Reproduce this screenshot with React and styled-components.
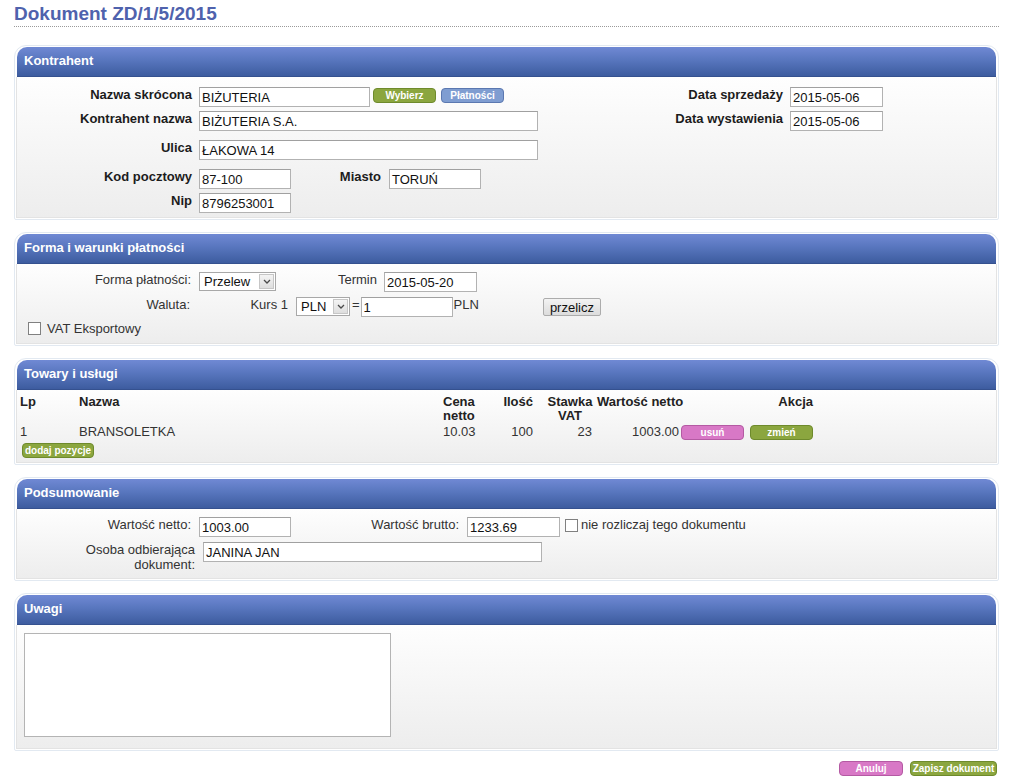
import React from 'react';
import styled, { createGlobalStyle } from 'styled-components';

const GlobalStyle = createGlobalStyle`
  body {
    margin: 0;
    background: #fff;
    font-family: "Liberation Sans", Arial, sans-serif;
    font-size: 13px;
    color: #333;
  }
`

const Page = styled.div`
  padding: 0 25px 0 14px;
`

const Title = styled.h1`
  margin: 0;
  padding-top: 2px;
  font-size: 19px;
  line-height: 24px;
  font-weight: bold;
  color: #4f62ad;
  border-bottom: 1px dotted #9a9a9a;
`

const Panels = styled.div`
  display: flex;
  flex-direction: column;
  gap: 12px;
  margin-top: 18px;
`

const Panel = styled.section`
  border: 1px solid #e2e9f1;
  border-radius: 12px 12px 2px 2px;
  padding: 1px;
`

const PanelHeader = styled.div`
  height: 30px;
  box-sizing: border-box;
  margin: 0 1px 0 1px;
  padding: 0 7px 3px;
  display: flex;
  align-items: center;
  border-radius: 10px 10px 0 0;
  background: linear-gradient(#7089d4 0%, #5876be 45%, #3d5c9f 100%);
  border-bottom: 1px solid #35518f;
  color: #fff;
  font-weight: bold;
  font-size: 13px;
`

const PanelBody = styled.div`
  height: ${p => p.$h}px;
  box-sizing: border-box;
  border: 1px solid #e3e3e3;
  border-top: none;
  background: linear-gradient(#fefefe, #ededed);
  padding: ${p => p.$pad || '0'};
`

const Columns = styled.div`
  display: flex;
`

const Column = styled.div`
  width: ${p => (p.$w ? `${p.$w}px` : 'auto')};
  display: flex;
  flex-direction: column;
`

const Row = styled.div`
  display: flex;
  align-items: flex-start;
  margin-top: ${p => p.$mt || 0}px;
`

const Label = styled.div`
  width: ${p => p.$w}px;
  flex: none;
  margin-right: ${p => (p.$gap === undefined ? 8 : p.$gap)}px;
  text-align: right;
  line-height: ${p => p.$lh || 16}px;
  font-weight: ${p => (p.$bold ? 'bold' : 'normal')};
  color: ${p => (p.$bold ? '#1c1c1c' : '#333')};
  white-space: nowrap;
`

const Text = styled.span`
  line-height: 16px;
  margin-left: ${p => p.$ml || 0}px;
  color: #333;
`

const Input = styled.div`
  width: ${p => p.$w}px;
  height: 20px;
  box-sizing: border-box;
  flex: none;
  border: 1px solid #b2b2b2;
  border-top-color: #a0a0a0;
  background: #fff;
  padding: 0 2px;
  margin-left: ${p => p.$ml || 0}px;
  line-height: 19px;
  color: #111;
  white-space: nowrap;
  overflow: hidden;
`

const TextArea = styled.div`
  width: 367px;
  height: 104px;
  box-sizing: border-box;
  border: 1px solid #b4b4b4;
  background: #fff;
`

const SelectBox = styled.div`
  width: ${p => p.$w}px;
  height: 19px;
  box-sizing: border-box;
  flex: none;
  display: flex;
  align-items: stretch;
  border: 1px solid #a8a8a8;
  background: #fff;
`

const SelectValue = styled.span`
  flex: 1;
  padding-left: 4px;
  line-height: 17px;
  color: #111;
`

const SelectArrow = styled.span`
  width: 13px;
  margin: 1px;
  display: flex;
  align-items: center;
  justify-content: center;
  border: 1px solid #c6c6c6;
  background: linear-gradient(#f4f4f4, #dedede);
`

const SmallButton = styled.span`
  width: ${p => p.$w}px;
  height: 15px;
  box-sizing: border-box;
  flex: none;
  display: inline-flex;
  align-items: center;
  justify-content: center;
  margin-left: ${p => p.$ml || 0}px;
  margin-top: ${p => p.$mt || 0}px;
  border-radius: 4px;
  border: 1px solid ${p => ({ green: '#6e8a2c', pink: '#b45aa3', blue: '#5b78b0' }[p.$variant])};
  background: ${p => ({ green: '#8ba63f', pink: '#d878c6', blue: '#7f9dd1' }[p.$variant])};
  color: #fff;
  font-size: 10px;
  font-weight: bold;
  line-height: 13px;
  white-space: nowrap;
`

const GrayButton = styled.span`
  height: 18px;
  box-sizing: border-box;
  padding: 0 6px;
  margin-left: ${p => p.$ml || 0}px;
  margin-top: 1px;
  display: inline-flex;
  align-items: center;
  border: 1px solid #acacac;
  border-radius: 2px;
  background: linear-gradient(#f3f3f3, #dcdcdc);
  color: #111;
`

const CheckBox = styled.span`
  width: 13px;
  height: 13px;
  box-sizing: border-box;
  flex: none;
  margin-left: ${p => p.$ml || 0}px;
  margin-top: ${p => p.$mt || 0}px;
  border: 1px solid #808080;
  background: #fff;
`

const Grid = styled.div`
  display: grid;
  grid-template-columns: 59px 364px 47px 47px 60px 82px 136px;
  line-height: 14px;
`

const Cell = styled.div`
  text-align: ${p => p.$align || 'left'};
  font-weight: ${p => (p.$head ? 'bold' : 'normal')};
  color: ${p => (p.$head ? '#222' : '#333')};
  padding-right: ${p => p.$pr || 0}px;
  padding-left: ${p => p.$pl || 0}px;
  margin-top: ${p => p.$mt || 0}px;
  line-height: ${p => p.$lh || 14}px;
  display: ${p => (p.$flex ? 'flex' : 'block')};
  white-space: nowrap;
  gap: 6px;
`

const Footer = styled.div`
  display: flex;
  justify-content: flex-end;
  gap: 7px;
  margin-top: 10px;
  padding-right: 2px;
`

const Chevron = () => (
  <svg width="8" height="5" viewBox="0 0 8 5">
    <path d="M1 1 L4 4 L7 1" fill="none" stroke="#4a4a4a" strokeWidth="1.3" />
  </svg>
)

const Select = ({ w, value }) => (
  <SelectBox $w={w}>
    <SelectValue>{value}</SelectValue>
    <SelectArrow><Chevron /></SelectArrow>
  </SelectBox>
)

export default function App() {
  return (
    <Page>
      <GlobalStyle />
      <Title>Dokument ZD/1/5/2015</Title>
      <Panels>
        <Panel>
          <PanelHeader>Kontrahent</PanelHeader>
          <PanelBody $h={141} $pad="10px 0 0 0">
            <Columns>
              <Column $w={646}>
                <Row>
                  <Label $w={175} $gap={7} $bold $lh={15}>Nazwa skrócona</Label>
                  <Input $w={171}>BIŻUTERIA</Input>
                  <SmallButton $variant="green" $w={63} $ml={3} $mt={1}>Wybierz</SmallButton>
                  <SmallButton $variant="blue" $w={63} $ml={5} $mt={1}>Płatności</SmallButton>
                </Row>
                <Row $mt={4}>
                  <Label $w={175} $gap={7} $bold $lh={15}>Kontrahent nazwa</Label>
                  <Input $w={339}>BIŻUTERIA S.A.</Input>
                </Row>
                <Row $mt={9}>
                  <Label $w={175} $gap={7} $bold $lh={15}>Ulica</Label>
                  <Input $w={339}>ŁAKOWA 14</Input>
                </Row>
                <Row $mt={9}>
                  <Label $w={175} $gap={7} $bold $lh={15}>Kod pocztowy</Label>
                  <Input $w={92}>87-100</Input>
                  <Label $w={90} $gap={8} $bold $lh={15}>Miasto</Label>
                  <Input $w={92}>TORUŃ</Input>
                </Row>
                <Row $mt={4}>
                  <Label $w={175} $gap={7} $bold $lh={15}>Nip</Label>
                  <Input $w={92}>8796253001</Input>
                </Row>
              </Column>
              <Column>
                <Row>
                  <Label $w={120} $gap={7} $bold $lh={15}>Data sprzedaży</Label>
                  <Input $w={93}>2015-05-06</Input>
                </Row>
                <Row $mt={4}>
                  <Label $w={120} $gap={7} $bold $lh={15}>Data wystawienia</Label>
                  <Input $w={93}>2015-05-06</Input>
                </Row>
              </Column>
            </Columns>
          </PanelBody>
        </Panel>

        <Panel>
          <PanelHeader>Forma i warunki płatności</PanelHeader>
          <PanelBody $h={80} $pad="8px 0 0 0">
            <Row>
              <Label $w={174}>Forma płatności:</Label>
              <Select w={77} value="Przelew" />
              <Label $w={101} $gap={7}>Termin</Label>
              <Input $w={93}>2015-05-20</Input>
            </Row>
            <Row $mt={5}>
              <Label $w={173} $gap={9}>Waluta:</Label>
              <Label $w={89}>Kurs 1</Label>
              <Select w={54} value="PLN" />
              <Text $ml={2}>=</Text>
              <Input $w={92} $ml={1}>1</Input>
              <Text $ml={1}>PLN</Text>
              <GrayButton $ml={64}>przelicz</GrayButton>
            </Row>
            <Row $mt={4}>
              <CheckBox $ml={11} $mt={1} />
              <Text $ml={6}>VAT Eksportowy</Text>
            </Row>
          </PanelBody>
        </Panel>

        <Panel>
          <PanelHeader>Towary i usługi</PanelHeader>
          <PanelBody $h={73} $pad="5px 0 0 3px">
            <Grid>
              <Cell $head>Lp</Cell>
              <Cell $head>Nazwa</Cell>
              <Cell $head>Cena<br />netto</Cell>
              <Cell $head $align="right" $pr={4}>Ilość</Cell>
              <Cell $head $align="center" $pl={6}>Stawka<br />VAT</Cell>
              <Cell $head $align="right">Wartość netto</Cell>
              <Cell $head $align="right" $pr={2}>Akcja</Cell>

              <Cell $mt={1} $lh={16}>1</Cell>
              <Cell $mt={1} $lh={16}>BRANSOLETKA</Cell>
              <Cell $mt={1} $lh={16}>10.03</Cell>
              <Cell $mt={1} $lh={16} $align="right" $pr={4}>100</Cell>
              <Cell $mt={1} $lh={16} $align="right" $pr={5}>23</Cell>
              <Cell $mt={1} $lh={16} $align="right">1003.00</Cell>
              <Cell $mt={1} $flex>
                <SmallButton $variant="pink" $w={63} $ml={2} $mt={1}>usuń</SmallButton>
                <SmallButton $variant="green" $w={63} $mt={1}>zmień</SmallButton>
              </Cell>
            </Grid>
            <SmallButton $variant="green" $w={72} $ml={2} $mt={3}>dodaj pozycje</SmallButton>
          </PanelBody>
        </Panel>

        <Panel>
          <PanelHeader>Podsumowanie</PanelHeader>
          <PanelBody $h={70} $pad="8px 0 0 0">
            <Row>
              <Label $w={174}>Wartość netto:</Label>
              <Input $w={92}>1003.00</Input>
              <Label $w={168}>Wartość brutto:</Label>
              <Input $w={93}>1233.69</Input>
              <CheckBox $ml={5} $mt={2} />
              <Text $ml={3}>nie rozliczaj tego dokumentu</Text>
            </Row>
            <Row $mt={5}>
              <Label $w={178} $lh={15}>Osoba odbierająca<br />dokument:</Label>
              <Input $w={339}>JANINA JAN</Input>
            </Row>
          </PanelBody>
        </Panel>

        <Panel>
          <PanelHeader>Uwagi</PanelHeader>
          <PanelBody $h={124} $pad="8px 0 0 7px">
            <TextArea />
          </PanelBody>
        </Panel>
      </Panels>
      <Footer>
        <SmallButton $variant="pink" $w={64}>Anuluj</SmallButton>
        <SmallButton $variant="green" $w={87}>Zapisz dokument</SmallButton>
      </Footer>
    </Page>
  );
}
